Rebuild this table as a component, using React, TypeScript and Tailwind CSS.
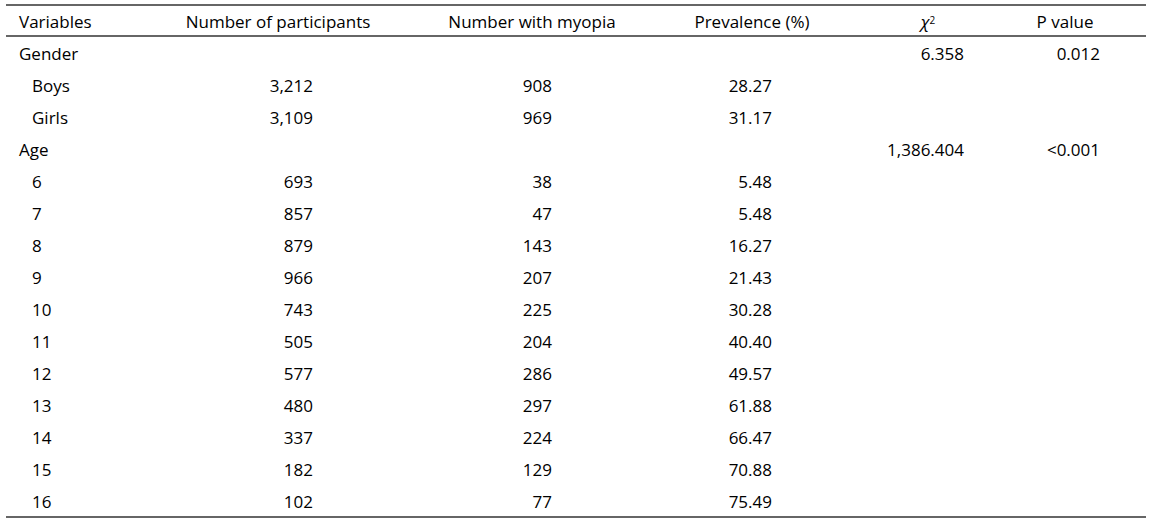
import React from 'react';

type Row = {
  label: string;
  indent?: boolean;
  n?: string;
  myopia?: string;
  prev?: string;
  chi?: string;
  p?: string;
};

const rows: Row[] = [
  { label: 'Gender', chi: '6.358', p: '0.012' },
  { label: 'Boys', indent: true, n: '3,212', myopia: '908', prev: '28.27' },
  { label: 'Girls', indent: true, n: '3,109', myopia: '969', prev: '31.17' },
  { label: 'Age', chi: '1,386.404', p: '<0.001' },
  { label: '6', indent: true, n: '693', myopia: '38', prev: '5.48' },
  { label: '7', indent: true, n: '857', myopia: '47', prev: '5.48' },
  { label: '8', indent: true, n: '879', myopia: '143', prev: '16.27' },
  { label: '9', indent: true, n: '966', myopia: '207', prev: '21.43' },
  { label: '10', indent: true, n: '743', myopia: '225', prev: '30.28' },
  { label: '11', indent: true, n: '505', myopia: '204', prev: '40.40' },
  { label: '12', indent: true, n: '577', myopia: '286', prev: '49.57' },
  { label: '13', indent: true, n: '480', myopia: '297', prev: '61.88' },
  { label: '14', indent: true, n: '337', myopia: '224', prev: '66.47' },
  { label: '15', indent: true, n: '182', myopia: '129', prev: '70.88' },
  { label: '16', indent: true, n: '102', myopia: '77', prev: '75.49' },
];

// column widths: label | participants | myopia | prevalence | chi2 | p | filler
const grid = 'grid grid-cols-[144px_256px_252px_188px_164px_110px_1fr] items-start leading-[24px]';

export default function App() {
  return (
    <div
      className="bg-white w-[1152px] h-[522px] pt-1 px-[6px] text-black text-[17px]"
      style={{ fontFamily: '"Open Sans", "Noto Sans", sans-serif' }}
    >
      <div className="w-[1140px] border-t-2 border-b-2 border-[#666]">
        <div className={`${grid} h-[31px] pt-[4px] border-b-2 border-[#666]`}>
          <div className="pl-[13px]">Variables</div>
          <div className="text-center">Number of participants</div>
          <div className="text-center">Number with myopia</div>
          <div className="text-center">Prevalence (%)</div>
          <div className="text-center">
            <span className="italic">χ</span>
            <sup className="text-[10px] relative -top-[4px]">2</sup>
          </div>
          <div className="text-center">P value</div>
          <div />
        </div>
        {rows.map((r, i) => (
          <div
            key={r.label}
            className={`${grid} pt-[5px] ${i === rows.length - 1 ? 'h-[31px]' : 'h-[32px]'}`}
          >
            <div className={r.indent ? 'pl-[26px]' : 'pl-[13px]'}>{r.label}</div>
            <div className="text-right pr-[93px]">{r.n}</div>
            <div className="text-right pr-[106px]">{r.myopia}</div>
            <div className="text-right pr-[74px]">{r.prev}</div>
            <div className="text-right pr-[46px]">{r.chi}</div>
            <div className="text-right pr-[20px]">{r.p}</div>
            <div />
          </div>
        ))}
      </div>
    </div>
  );
}
